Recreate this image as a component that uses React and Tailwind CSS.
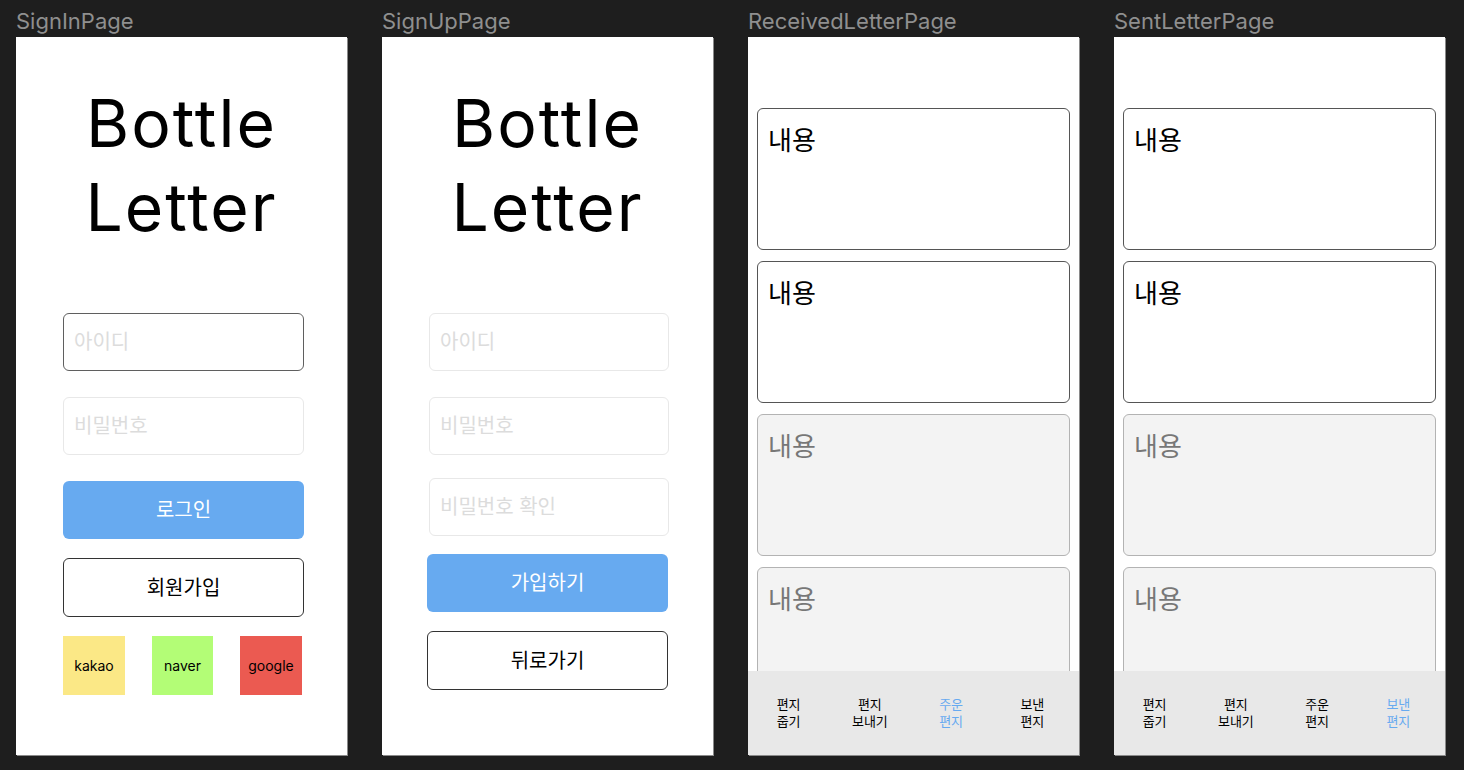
import React from "react";

const font = { fontFamily: '"Inter", "Noto Sans CJK KR", sans-serif' };

const Title = () => (
  <div className="pt-[44px] text-center text-[66px] leading-[84px] tracking-[2px] text-black">
    <div>Bottle</div>
    <div>Letter</div>
  </div>
);

const Input = ({ placeholder, active, className = "" }) => (
  <div
    className={`h-[58px] rounded-[6px] border flex items-center pl-[10px] text-[20px] text-[#dcdcdc] bg-white ${
      active ? "border-[#5f5f5f]" : "border-[#e8e8e8]"
    } ${className}`}
  >
    {placeholder}
  </div>
);

const Frame = ({ label, children }) => (
  <div className="flex flex-col w-[331px]">
    <div className="h-[37px] pt-[8px] text-[22px] leading-[26px] text-[#8f8f8f]">
      {label}
    </div>
    <div className="relative h-[718px] bg-white overflow-hidden shadow-[1px_1px_0_#8a8a8a]">
      {children}
    </div>
  </div>
);

const SignIn = () => (
  <Frame label="SignInPage">
    <Title />
    <div className="ml-[47px] w-[241px] flex flex-col">
      <Input placeholder="아이디" active className="mt-[64px]" />
      <Input placeholder="비밀번호" className="mt-[26px]" />
      <div className="mt-[26px] h-[58px] rounded-[6px] bg-[#67aaf0] flex items-center justify-center text-[20px] text-white">
        로그인
      </div>
      <div className="mt-[19px] h-[59px] rounded-[6px] border border-[#333] flex items-center justify-center text-[20px] text-black">
        회원가입
      </div>
      <div className="mt-[19px] flex gap-[27px]">
        <div className="w-[62px] h-[59px] bg-[#fbe886] flex items-center justify-center text-[14px] text-black">
          kakao
        </div>
        <div className="w-[61px] h-[59px] bg-[#b3fd76] flex items-center justify-center text-[14px] text-black">
          naver
        </div>
        <div className="w-[62px] h-[59px] bg-[#eb5a51] flex items-center justify-center text-[14px] text-black">
          google
        </div>
      </div>
    </div>
  </Frame>
);

const SignUp = () => (
  <Frame label="SignUpPage">
    <Title />
    <div className="ml-[47px] w-[240px] flex flex-col">
      <Input placeholder="아이디" className="mt-[64px]" />
      <Input placeholder="비밀번호" className="mt-[26px]" />
      <Input placeholder="비밀번호 확인" className="mt-[23px]" />
    </div>
    <div className="ml-[45px] w-[241px] flex flex-col">
      <div className="mt-[18px] h-[58px] rounded-[6px] bg-[#67aaf0] flex items-center justify-center text-[20px] text-white">
        가입하기
      </div>
      <div className="mt-[19px] h-[59px] rounded-[6px] border border-[#333] flex items-center justify-center text-[20px] text-black">
        뒤로가기
      </div>
    </div>
  </Frame>
);

const Card = ({ read }) => (
  <div
    className={`h-[142px] rounded-[6px] border pl-[10px] pt-[14px] text-[26px] leading-[36px] ${
      read
        ? "bg-[#f3f3f3] border-[#b3b3b3] text-[#777]"
        : "bg-white border-[#555] text-black"
    }`}
  >
    내용
  </div>
);

const tabs = [
  ["편지", "줍기"],
  ["편지", "보내기"],
  ["주운", "편지"],
  ["보낸", "편지"],
];

const LetterList = ({ label, active }) => (
  <Frame label={label}>
    <div className="px-[9px] pt-[71px] flex flex-col gap-[11px]">
      <Card />
      <Card />
      <Card read />
      <Card read />
    </div>
    <div className="absolute left-0 right-0 bottom-0 h-[84px] bg-[#e8e8e8] grid grid-cols-4 pr-[6px] items-center">
      {tabs.map((t, i) => (
        <div
          key={i}
          className={`text-center text-[13px] leading-[17px] ${
            i === active ? "text-[#67aaf0]" : "text-black"
          }`}
        >
          <div>{t[0]}</div>
          <div>{t[1]}</div>
        </div>
      ))}
    </div>
  </Frame>
);

export default function App() {
  return (
    <div
      className="w-[1464px] h-[770px] bg-[#1e1e1e] flex gap-[35px] px-[16px]"
      style={font}
    >
      <SignIn />
      <SignUp />
      <LetterList label="ReceivedLetterPage" active={2} />
      <LetterList label="SentLetterPage" active={3} />
    </div>
  );
}
